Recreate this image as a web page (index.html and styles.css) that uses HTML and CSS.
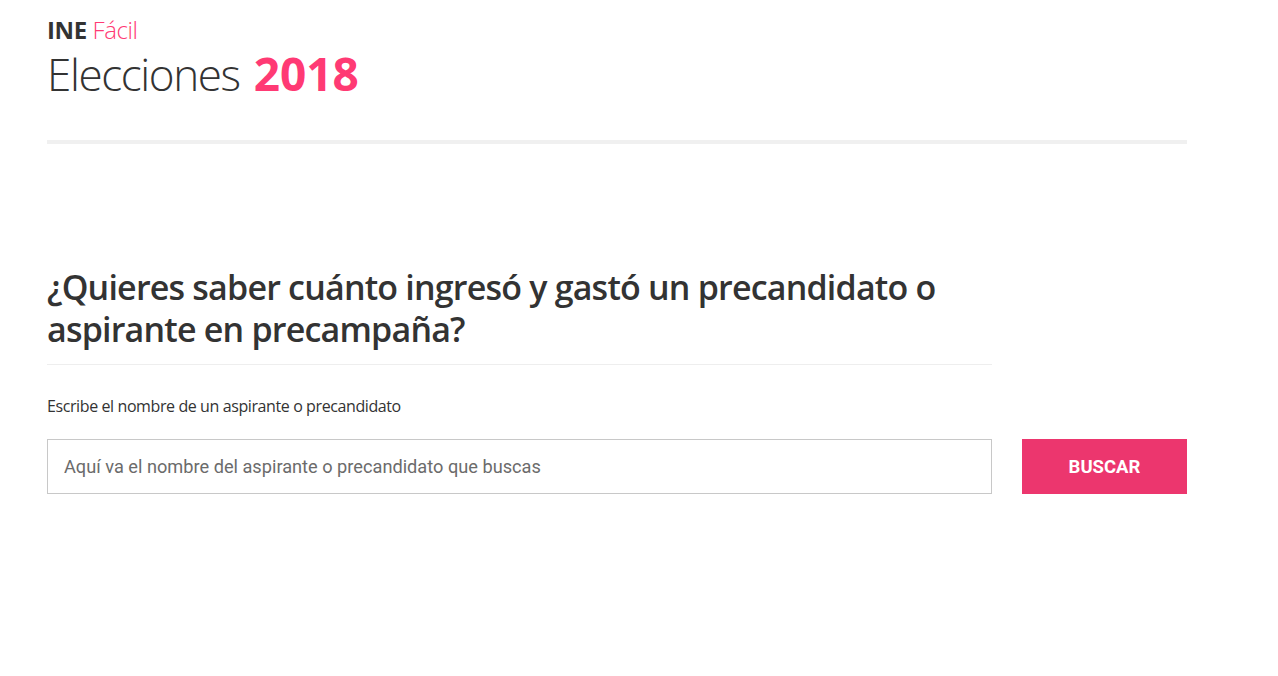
FILE: index.html
```html
<!DOCTYPE html>
<html lang="es">
<head>
<meta charset="utf-8">
<title>INE Fácil - Elecciones 2018</title>
<link rel="stylesheet" href="styles.css">
</head>
<body>
<div class="page">
  <header class="header">
    <div class="brand"><span class="brand-ine">INE</span> <span class="brand-facil">Fácil</span></div>
    <h1 class="title">Elecciones <strong class="year">2018</strong></h1>
  </header>
  <hr class="rule">
  <section class="search">
    <h2 class="question">¿Quieres saber cuánto ingresó y gastó un precandidato o aspirante en precampaña?</h2>
    <p class="label">Escribe el nombre de un aspirante o precandidato</p>
    <form class="search-row">
      <input class="search-input" type="text" placeholder="Aquí va el nombre del aspirante o precandidato que buscas">
      <button class="search-btn" type="button">BUSCAR</button>
    </form>
  </section>
</div>
</body>
</html>
```

FILE: styles.css
```css
* { box-sizing: border-box; }
html, body { margin: 0; padding: 0; background: #fff; }
body {
  font-family: "Open Sans", "Noto Sans", sans-serif;
  color: #333;
}
.page {
  width: 1140px;
  margin-left: 47px;
  padding-top: 14px;
}
.header { display: flex; flex-direction: column; }
.brand {
  font-size: 24px;
  line-height: 32px;
  letter-spacing: -0.4px;
}
.brand-ine { font-weight: 700; color: #333; }
.brand-facil { font-weight: 300; color: #ff3a74; }
.title {
  margin: 0;
  height: 56px;
  font-size: 44px;
  line-height: 56px;
  font-weight: 300;
  color: #333;
  letter-spacing: -1.4px;
}
.year {
  font-size: 46px;
  line-height: 1;
  font-weight: 700;
  color: #ff3a74;
  letter-spacing: 0;
  margin-left: 4px;
}
.rule {
  margin: 38px 0 0 0;
  border: 0;
  height: 4px;
  background: #f0f0f0;
}
.search { margin-top: 122px; width: 1140px; }
.question {
  margin: 0;
  width: 945px;
  font-size: 34px;
  line-height: 42px;
  font-weight: 600;
  color: #333;
  padding-bottom: 14px;
  border-bottom: 1px solid #eee;
  letter-spacing: -0.8px;
}
.label {
  margin: 30px 0 0 0;
  font-size: 16px;
  line-height: 22px;
  font-weight: 400;
  color: #333;
  letter-spacing: -0.4px;
}
.search-row {
  display: flex;
  gap: 30px;
  margin-top: 22px;
}
.search-input {
  width: 945px;
  height: 55px;
  border: 1px solid #c8c8c8;
  padding: 0 16px;
  font-family: "Roboto", "Liberation Sans", sans-serif;
  font-size: 18.2px;
  color: #333;
  outline: none;
}
.search-input::placeholder { color: #6b6b6b; }
.search-btn {
  width: 165px;
  height: 55px;
  border: 0;
  background: #ec366e;
  color: #fff;
  font-family: "Roboto", "Liberation Sans", sans-serif;
  font-weight: 700;
  font-size: 18.5px;
}
```
